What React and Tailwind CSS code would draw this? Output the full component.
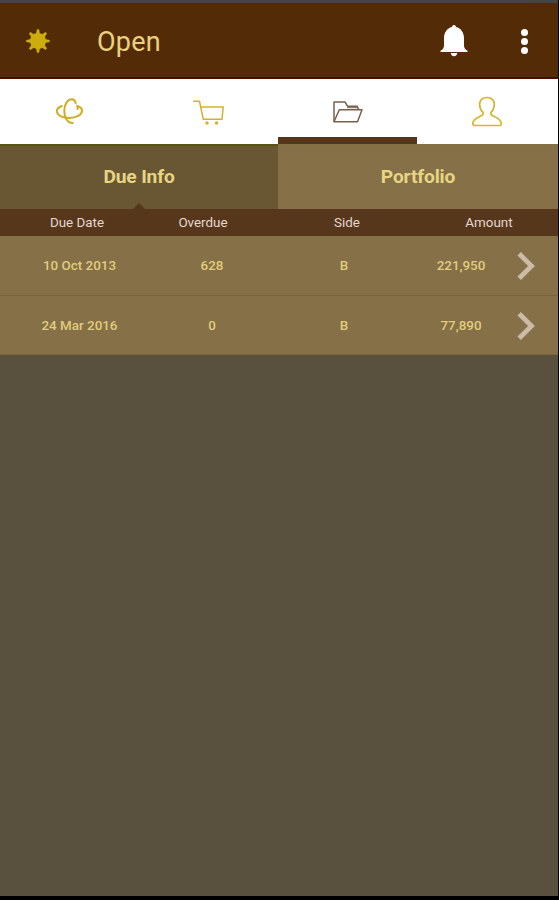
const rows = [
  { date: '10 Oct 2013', overdue: '628', side: 'B', amount: '221,950' },
  { date: '24 Mar 2016', overdue: '0', side: 'B', amount: '77,890' },
];

function SunIcon() {
  const rays = [0, 45, 90, 135, 180, 225, 270, 315];
  return (
    <svg className="ml-[26px] h-6 w-6 shrink-0" viewBox="0 0 24 24" fill="#ccad0b">
      <circle cx="12" cy="12" r="8" />
      {rays.map((a) => (
        <path key={a} d="M9.900 5.500 11 .3h2L14.100 5.500Z" transform={`rotate(${a} 12 12)`} />
      ))}
    </svg>
  );
}

function BellIcon() {
  return (
    <svg className="h-8 w-7 shrink-0" viewBox="0 0 28 32" fill="#fff">
      <path d="M14 0c1.200 0 1.800.8 2 2 5 1.200 8 5.500 8 11v7.500c0 2.300 1 4 3.500 5.300V27H.5v-1.200C3 24.500 4 22.800 4 20.500V13C4 7.500 7 3.200 12 2c.2-1.200.8-2 2-2Z" />
      <path d="M10.700 28h6.600c-.3 2-1.600 3.300-3.300 3.300s-3-1.300-3.300-3.300Z" />
    </svg>
  );
}

function OrbitIcon() {
  return (
    <svg className="h-[30px] w-[30px]" viewBox="0 0 30 30" fill="none" stroke="#d0ad20" strokeLinecap="round">
      <path d="M20.700 6C20 3.500 18.800 2.300 16.800 2.300 12.300 2.300 9.300 7.500 9.300 13.700c0 6.500 2.700 12.300 8.400 12.300" strokeWidth="2" />
      <path d="M6.800 9C3.300 10.300 1.600 12.200 1.900 14.700 2.500 18.500 8 21 14.300 21c7 0 12.700-3 12.700-7.200 0-2.200-1.800-3.900-4.700-4.800l.3 3" strokeWidth="2" />
    </svg>
  );
}

function CartIcon() {
  return (
    <svg className="h-[30px] w-[34px]" viewBox="0 0 34 30" fill="none" stroke="#d3b22c" strokeWidth="1.500" strokeLinecap="round" strokeLinejoin="round">
      <path d="M1.700 4.300h5.800L11.300 22.300h18.700L31.200 10H8.700" />
      <circle cx="15" cy="26" r="1" fill="#d3b22c" />
      <circle cx="24.500" cy="26" r="1" fill="#d3b22c" />
    </svg>
  );
}

function FolderIcon() {
  return (
    <svg className="h-[24px] w-[32px]" viewBox="0 0 32 24" fill="none" stroke="#79604c" strokeWidth="1.500" strokeLinejoin="round">
      <path d="M2 21.700V2h11l2.500 4.200h9.700L26.500 9.500" />
      <path d="M2 21.700 7.300 9.700H30L25.500 21.700Z" />
      <path d="M15 7.700h10" strokeWidth="1" />
    </svg>
  );
}

function PersonIcon() {
  return (
    <svg className="h-[32px] w-[32px]" viewBox="0 0 32 32" fill="none" stroke="#d6b434" strokeWidth="1.700" strokeLinejoin="round">
      <path d="M16 1.500c-5 0-7.600 3.200-7.400 7.400.2 3.400 1.500 5.800 3.500 7.500.5 1.700-.4 2.700-2.300 3.600-3.800 1.800-7.400 2.900-8 6.900-.2 1.700.4 2.600 1.900 2.600h24.800c1.500 0 2-.9 1.700-2.600-.8-4-4-5.100-8-6.900-1.900-.9-2.700-1.900-2.300-3.600 2-1.700 3.200-4.100 3.400-7.500.2-4.200-2.300-7.400-7.300-7.400Z" />
    </svg>
  );
}

export default function App() {
  return (
    <div className="flex h-[900px] w-[559px] flex-col overflow-hidden border-r border-b-4 border-black bg-[#59513d] font-[Roboto,sans-serif]">
      <header className="flex h-[79px] shrink-0 items-center border-t-[3px] border-b-2 border-t-[#454545] border-b-[#460d02] bg-[#532c07] pt-[2px]">
        <SunIcon />
        <h1 className="mt-[2px] ml-[47px] grow text-[27px] leading-8 tracking-[0.2px] text-[#e9d27e]">Open</h1>
        <BellIcon />
        <div className="mr-[30px] ml-[53px] flex flex-col gap-[2px]">
          <i className="h-[7px] w-[7px] rounded-full bg-white" />
          <i className="h-[7px] w-[7px] rounded-full bg-white" />
          <i className="h-[7px] w-[7px] rounded-full bg-white" />
        </div>
      </header>

      <nav className="grid h-[65px] shrink-0 grid-cols-[139px_139px_139px_139px] bg-white">
        <div className="flex items-center justify-center"><OrbitIcon /></div>
        <div className="flex items-center justify-center"><CartIcon /></div>
        <div className="flex items-center justify-center border-b-[7px] border-[#57351a] pt-[7px]"><FolderIcon /></div>
        <div className="flex items-center justify-center"><PersonIcon /></div>
      </nav>

      <div className="grid h-[65px] shrink-0 grid-cols-[278px_1fr] text-[19.200px] font-bold tracking-[-0.15px] text-[#e6d582]">
        <div className="flex flex-col items-center border-t-2 border-[#58530f] bg-[#695734]">
          <span className="flex grow items-center pt-[6px]">Due Info</span>
          <svg className="h-[6px] w-3" viewBox="0 0 12 6"><path d="M0 6 6 0 12 6Z" fill="#57371b" /></svg>
        </div>
        <div className="flex items-center justify-center border-t border-[#82703d] bg-[#867047]">Portfolio</div>
      </div>

      <div className="grid h-[27px] shrink-0 grid-cols-[154px_98px_190px_94px] items-center bg-[#57371b] pt-[2px] text-center text-[13.400px] text-[#e3d8d0]">
        <span>Due Date</span>
        <span>Overdue</span>
        <span>Side</span>
        <span>Amount</span>
      </div>

      {rows.map((r) => (
        <div key={r.date} className="grid h-[59.500px] shrink-0 grid-cols-[159px_106px_158px_76px_1fr] items-center border-b border-[#79643d] bg-[#867047] pt-[2px] text-center text-[13.400px] font-medium text-[#e0cc7c]">
          <span>{r.date}</span>
          <span>{r.overdue}</span>
          <span>{r.side}</span>
          <span>{r.amount}</span>
          <svg className="ml-[18px] h-[30px] w-5" viewBox="0 0 20 30" fill="none" stroke="#cbbba7" strokeWidth="4.800">
            <path d="M2.200 2.700 14.500 15 2.200 27.300" />
          </svg>
        </div>
      ))}
    </div>
  );
}
